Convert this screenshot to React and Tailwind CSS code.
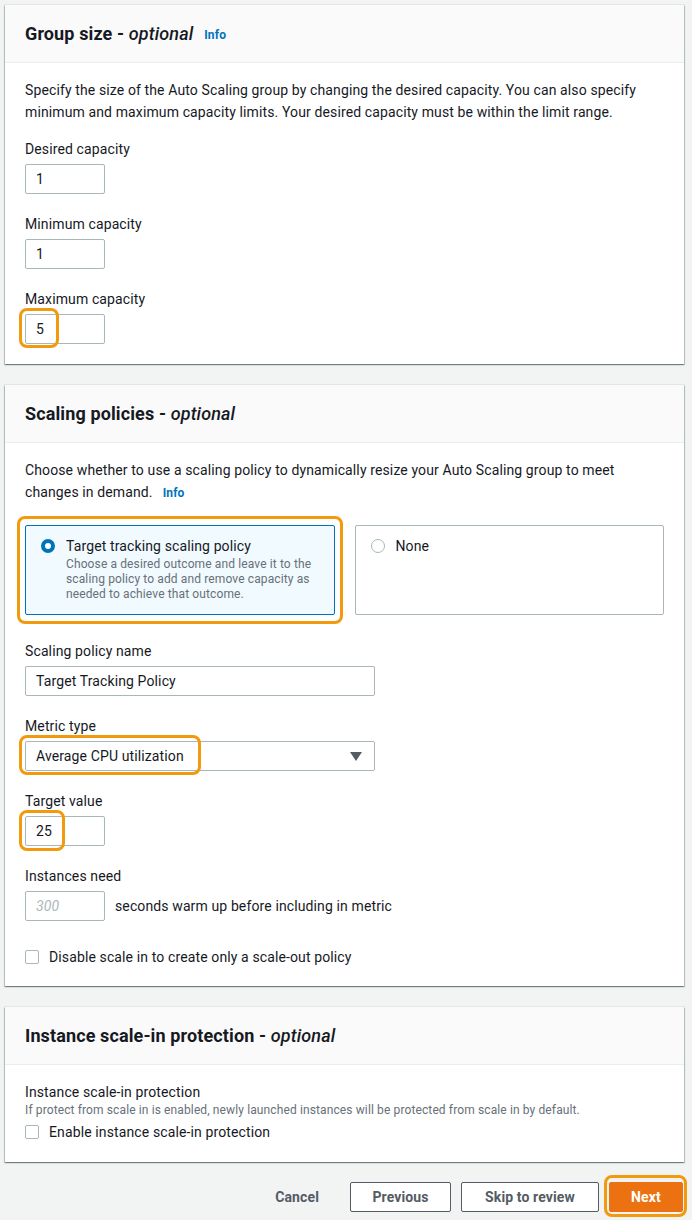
import React from "react";

const CARD_SHADOW =
  "shadow-[0_1px_1px_0_rgba(0,28,36,0.3),1px_1px_1px_0_rgba(0,28,36,0.15),-1px_1px_1px_0_rgba(0,28,36,0.15),0_0_0_1px_rgba(0,28,36,0.06)]";

function Ring({ className }) {
  return <div className={`absolute pointer-events-none border-[3px] border-[#f29a0e] rounded-[8px] ${className}`} />;
}

function Card({ title, info, children, bodyClass = "" }) {
  return (
    <section className={`bg-white ${CARD_SHADOW}`}>
      <header className="h-[58px] flex items-center px-5 bg-[#fafafa] border-b border-[#eaeded]">
        <h2 className="text-[18px] font-bold text-[#16191f] leading-[26px]">
          {title} - <i className="font-medium">optional</i>
        </h2>
        {info && <span className="ml-[11px] mt-[2px] text-[12px] font-bold text-[#0073bb]">Info</span>}
      </header>
      <div className={`px-5 ${bodyClass}`}>{children}</div>
    </section>
  );
}

function Label({ children }) {
  return <div className="text-[14px] leading-[22px] text-[#16191f]">{children}</div>;
}

function Input({ value, width = "w-[80px]", placeholder, ring }) {
  return (
    <div className={`relative mt-1 ${width}`}>
      <div className="h-[30px] border border-[#aab7b8] rounded-[2px] bg-white flex items-center px-[10px] text-[14px] text-[#16191f]">
        {value ?? <span className="italic text-[#aab7b8]">{placeholder}</span>}
      </div>
      {ring}
    </div>
  );
}

function Checkbox({ label }) {
  return (
    <label className="flex items-center gap-[10px] text-[14px] leading-[22px] text-[#16191f]">
      <span className="w-[14px] h-[14px] border border-[#aab7b8] rounded-[2px] bg-white" />
      {label}
    </label>
  );
}

export default function App() {
  return (
    <div
      className="min-h-screen bg-[#f2f3f3] pt-[5px] pl-[5px] pr-[8px] pb-[6px] flex flex-col gap-[21px] text-[#16191f] tracking-[0.12px]"
      style={{ fontFamily: "Roboto, 'Liberation Sans', sans-serif" }}
    >
      <Card title="Group size" info bodyClass="pt-4 pb-5">
        <p className="text-[14px] leading-[22px]">
          Specify the size of the Auto Scaling group by changing the desired capacity. You can also specify minimum and maximum capacity limits. Your desired capacity must be within the limit range.
        </p>
        <div className="mt-[15px] flex flex-col gap-[19px]">
          <div>
            <Label>Desired capacity</Label>
            <Input value="1" />
          </div>
          <div>
            <Label>Minimum capacity</Label>
            <Input value="1" />
          </div>
          <div>
            <Label>Maximum capacity</Label>
            <Input value="5" ring={<Ring className="-left-[6px] -top-[6px] w-[40px] h-[40px]" />} />
          </div>
        </div>
      </Card>

      <Card title="Scaling policies" bodyClass="pt-4 pb-[18px]">
        <p className="text-[14px] leading-[22px] pr-5">
          Choose whether to use a scaling policy to dynamically resize your Auto Scaling group to meet changes in demand.
          <span className="ml-[10px] text-[12px] font-bold text-[#0073bb]">Info</span>
        </p>
        <div className="mt-[21px] grid grid-cols-2 gap-5 h-[90px]">
          <div className="relative">
            <div className="h-full border border-[#0073bb] bg-[#f1faff] rounded-[2px] pl-[15px] pr-3 pt-[9px] flex gap-[11px]">
              <span className="mt-[4px] w-[14px] h-[14px] rounded-full border-[4px] border-[#0073bb] bg-white shrink-0" />
              <div>
                <div className="text-[14px] leading-[22px]">Target tracking scaling policy</div>
                <div className="text-[12px] leading-[15px] text-[#687078]">
                  Choose a desired outcome and leave it to the scaling policy to add and remove capacity as needed to achieve that outcome.
                </div>
              </div>
            </div>
            <Ring className="-left-[8px] -top-[9px] -right-[8px] -bottom-[9px]" />
          </div>
          <div className="h-full border border-[#aab7b8] rounded-[2px] pl-[15px] pt-[9px] flex gap-[11px]">
            <span className="mt-[4px] w-[14px] h-[14px] rounded-full border border-[#aab7b8] bg-white shrink-0" />
            <div className="text-[14px] leading-[22px]">None</div>
          </div>
        </div>

        <div className="mt-[25px] flex flex-col gap-[19px]">
          <div>
            <Label>Scaling policy name</Label>
            <Input value="Target Tracking Policy" width="w-[350px]" />
          </div>
          <div>
            <Label>Metric type</Label>
            <div className="relative mt-1 w-[350px]">
              <div className="h-[30px] border border-[#aab7b8] rounded-[2px] bg-white flex items-center justify-between pl-[10px] pr-[12px] text-[14px]">
                <span>Average CPU utilization</span>
                <svg width="12" height="9" viewBox="0 0 12 9">
                  <path d="M0 0h12L6 9z" fill="#545b64" />
                </svg>
              </div>
              <Ring className="-left-[6px] -top-[6px] w-[182px] h-[40px]" />
            </div>
          </div>
          <div>
            <Label>Target value</Label>
            <Input value="25" ring={<Ring className="-left-[6px] -top-[6px] w-[46px] h-[41px]" />} />
          </div>
          <div>
            <Label>Instances need</Label>
            <div className="flex items-center gap-[10px]">
              <Input placeholder="300" />
              <span className="mt-1 text-[14px]">seconds warm up before including in metric</span>
            </div>
          </div>
        </div>
        <div className="mt-[25px]">
          <Checkbox label="Disable scale in to create only a scale-out policy" />
        </div>
      </Card>

      <Card title="Instance scale-in protection" bodyClass="pt-[17px] pb-[19px]">
        <div className="text-[14px] leading-[20px]">Instance scale-in protection</div>
        <div className="text-[12px] leading-[16px] text-[#687078]">
          If protect from scale in is enabled, newly launched instances will be protected from scale in by default.
        </div>
        <div className="mt-[3px]">
          <Checkbox label="Enable instance scale-in protection" />
        </div>
      </Card>

      <div className="-mt-[1px] flex items-center justify-end gap-[10px] pr-[1px]">
        <button className="px-5 h-[30px] text-[14px] font-bold text-[#545b64] mr-[1px]">Cancel</button>
        <button className="w-[101px] h-[30px] border border-[#545b64] rounded-[2px] bg-white text-[14px] font-bold text-[#545b64]">Previous</button>
        <button className="w-[138px] h-[30px] border border-[#545b64] rounded-[2px] bg-white text-[14px] font-bold text-[#545b64]">Skip to review</button>
        <div className="relative">
          <button className="w-[74px] h-[30px] rounded-[2px] bg-[#ec7211] border border-[#ec7211] text-[14px] font-bold text-white">Next</button>
          <Ring className="-left-[5px] -top-[7px] -right-[4px] -bottom-[5px]" />
        </div>
      </div>
    </div>
  );
}
